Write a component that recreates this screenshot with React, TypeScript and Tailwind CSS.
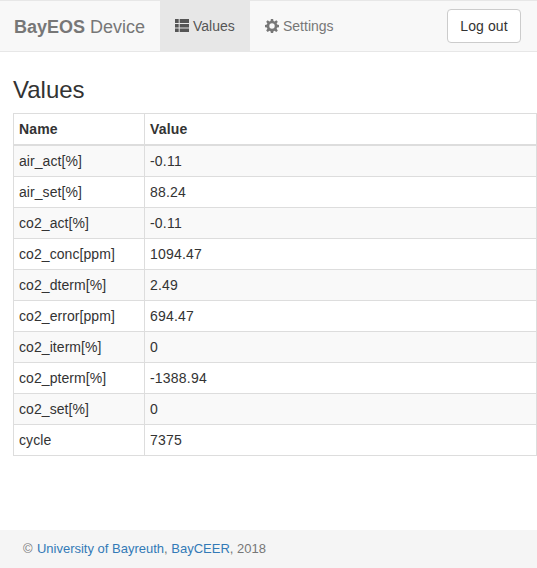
import React from "react";

const rows: [string, string][] = [
  ["air_act[%]", "-0.11"],
  ["air_set[%]", "88.24"],
  ["co2_act[%]", "-0.11"],
  ["co2_conc[ppm]", "1094.47"],
  ["co2_dterm[%]", "2.49"],
  ["co2_error[ppm]", "694.47"],
  ["co2_iterm[%]", "0"],
  ["co2_pterm[%]", "-1388.94"],
  ["co2_set[%]", "0"],
  ["cycle", "7375"],
];

function ListIcon() {
  return (
    <svg width="14" height="14" viewBox="0 0 14 14" fill="currentColor">
      <path d="M0 0h3.700v4H0zM4.700 0H14v4H4.700zM0 5h3.700v3.500H0zM4.700 5H14v3.500H4.700zM0 9.500h3.700V13H0zM4.700 9.500H14V13H4.700z" />
    </svg>
  );
}

function CogIcon() {
  return (
    <svg width="14" height="14" viewBox="0 0 14 14" fill="currentColor" className="mb-px">
      <path
        fillRule="evenodd"
        d="M5.900 0h2.200l.4 2 1.100.45 1.700-1.150 1.500 1.500-1.150 1.700.45 1.100 1.900.4v2.200l-1.900.4-.45 1.100 1.150 1.700-1.500 1.500-1.700-1.150-1.100.45-.4 1.800H5.900l-.4-1.800-1.100-.45-1.700 1.150-1.500-1.500 1.150-1.700-.45-1.100L0 8.200V6l1.900-.4.45-1.100L1.200 2.800l1.500-1.500 1.700 1.150L5.500 2zM7 4.300a2.700 2.700 0 1 0 0 5.400 2.700 2.700 0 0 0 0-5.400z"
      />
    </svg>
  );
}

export default function App() {
  return (
    <div className="flex h-[568px] w-[537px] flex-col overflow-hidden bg-white font-['Liberation_Sans',Arial,sans-serif] text-[14px] leading-5 text-[#333]">
      <nav className="flex h-[52px] shrink-0 items-start border-y border-[#e7e7e7] bg-[#f8f8f8] text-[#777]">
        <a className="w-[160px] py-4 pl-[14px] text-[18px]">
          <b>BayEOS</b> Device
        </a>
        <a className="flex h-[50px] w-[90px] items-center gap-1 bg-[#e7e7e7] pl-[15px] text-[#555]">
          <ListIcon />
          Values
        </a>
        <a className="flex h-[50px] items-center gap-1 pl-[15px]">
          <CogIcon />
          Settings
        </a>
        <button className="mt-2 mr-4 ml-auto h-[34px] w-[74px] rounded border border-[#ccc] bg-white tracking-[0.08px] text-[#333]">
          Log out
        </button>
      </nav>
      <main className="flex-1 pl-[13px]">
        <h3 className="mt-[25px] mb-[10px] text-[24px] leading-[26px]">Values</h3>
        <table className="w-[524px] table-fixed border-separate border-spacing-0 border-t border-l border-[#ddd]">
          <thead>
            <tr className="h-8">
              <th className="w-[131px] border-r border-b-2 border-[#ddd] px-[5px] py-0 text-left tracking-[0.15px]">Name</th>
              <th className="border-r border-b-2 border-[#ddd] px-[5px] py-0 text-left tracking-[0.15px]">Value</th>
            </tr>
          </thead>
          <tbody>
            {rows.map(([name, value]) => (
              <tr key={name} className="h-[31px] odd:bg-[#f9f9f9]">
                <td className="border-r border-b border-[#ddd] px-[5px] tracking-[0.07px]">{name}</td>
                <td className="border-r border-b border-[#ddd] px-[5px] tracking-[0.2px]">{value}</td>
              </tr>
            ))}
          </tbody>
        </table>
      </main>
      <footer className="h-[38px] shrink-0 bg-[#f5f5f5] pt-[9px] pl-[23px] text-[13px] text-[#777]">
        © <a className="ml-[0.7px] text-[#337ab7]">University of Bayreuth</a>, <a className="text-[#337ab7]">BayCEER</a>, 2018
      </footer>
    </div>
  );
}
